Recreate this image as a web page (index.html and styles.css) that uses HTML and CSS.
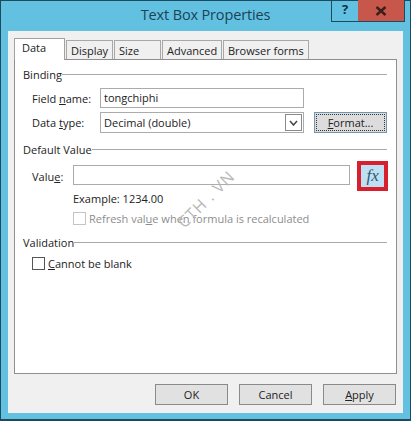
FILE: index.html
```html
<!DOCTYPE html>
<html lang="en">
<head>
    <meta charset="UTF-8">
    <meta name="viewport" content="width=device-width, initial-scale=1.0">
    <title>Text Box Properties</title>
    <link rel="stylesheet" href="styles.css">
</head>
<body>
    <div class="window">
        <header class="titlebar">
            <h1>Text Box Properties</h1>
            <div class="controls">
                <span class="help">?</span>
                <span class="close">
                    <svg width="12" height="10" viewBox="0 0 12 10"><path d="M1.5 1 L10.5 9 M10.5 1 L1.5 9" stroke="#3a1f1a" stroke-width="2.4" fill="none"/></svg>
                </span>
            </div>
        </header>

        <div class="client">
            <div class="tabs">
                <span class="tab active tab-data">Data</span>
                <span class="tab tab-display">Display</span>
                <span class="tab tab-size">Size</span>
                <span class="tab tab-advanced">Advanced</span>
                <span class="tab tab-browser">Browser forms</span>
            </div>

            <div class="panel">
                <div class="group-title">Binding</div>
                <div class="row row-field">
                    <label class="field-label">Field <u>n</u>ame:</label>
                    <div class="input input-name">tongchiphi</div>
                </div>
                <div class="row row-type">
                    <label class="field-label">Data <u>t</u>ype:</label>
                    <div class="input input-name select">
                        <span>Decimal (double)</span>
                        <span class="arrow">
                            <svg width="9" height="6" viewBox="0 0 9 6"><path d="M1 1 L4.5 5 L8 1" stroke="#444" stroke-width="1.5" fill="none"/></svg>
                        </span>
                    </div>
                    <button class="btn btn-format"><u>F</u>ormat...</button>
                </div>

                <div class="group-title group-default">Default Value</div>
                <div class="row row-value">
                    <label class="value-label">Valu<u>e</u>:</label>
                    <div class="input input-value"></div>
                    <div class="fx-button"><span class="fx">fx</span></div>
                </div>
                <div class="example">Example: 1234.00</div>
                <div class="check-row check-refresh">
                    <span class="checkbox disabled"></span>
                    <span class="disabled-text">Refresh val<u>u</u>e when formula is recalculated</span>
                </div>

                <div class="group-title group-validation">Validation</div>
                <div class="check-row check-blank">
                    <span class="checkbox"></span>
                    <span><u>C</u>annot be blank</span>
                </div>

                <div class="watermark">CTH . VN</div>
            </div>

            <div class="footer">
                <button class="btn btn-footer">OK</button>
                <button class="btn btn-footer">Cancel</button>
                <button class="btn btn-footer"><u>A</u>pply</button>
            </div>
        </div>
    </div>
</body>
</html>
```

FILE: styles.css
```css
* { box-sizing: border-box; }
html, body { margin: 0; padding: 0; }
body { width: 411px; height: 421px; overflow: hidden; font-family: "Open Sans", sans-serif; font-size: 11px; color: #222; }
u { text-underline-offset: 1px; }

.window { width: 411px; height: 421px; background: #62c1e0; border: 1px solid #1d4a5e; border-bottom-width: 2px; padding: 0 7px 6px; display: flex; flex-direction: column; }

.titlebar { height: 30px; display: flex; justify-content: center; position: relative; }
.titlebar h1 { margin: 3px 0 0; font-size: 14.5px; font-weight: 400; letter-spacing: -0.15px; color: #1c4258; line-height: 22px; }
.controls { position: absolute; top: -1px; right: -2px; height: 22px; display: flex; border: 1px solid #1f4a5e; border-top: none; }
.help { width: 26px; text-align: center; font-weight: 700; font-size: 13px; line-height: 19px; color: #14304a; }
.close { width: 46px; background: #c7574a; display: flex; align-items: center; justify-content: center; }

.client { flex: 1; background: #f0f0f0; padding: 7px 6px 0; display: flex; flex-direction: column; }

.tabs { display: flex; height: 21px; align-items: flex-end; gap: 1px; position: relative; z-index: 1; }
.tab { height: 19px; background: #f0f0f0; border: 1px solid #a8a8a8; border-bottom: none; padding: 2px 0 0 4px; line-height: 16px; white-space: nowrap; }
.tab.active { height: 22px; margin-bottom: -1px; background: #fff; border-color: #a0a0a0; padding: 1px 0 0 7px; }
.tab-data { width: 51px; }
.tab-display { width: 47px; }
.tab-size { width: 47px; }
.tab-advanced { width: 60px; }
.tab-browser { width: 86px; }

.panel { height: 315px; background: #fff; border: 1px solid #8f8f8f; padding: 0 8px; position: relative; }

.group-title { display: flex; align-items: center; height: 16px; margin-top: 6px; }
.group-title::after { content: ""; flex: 1; height: 1px; background: #a8a8a8; margin-right: 1px; }
.group-default { margin-top: 8px; }
.group-validation { margin-top: 8px; }

.row { display: flex; align-items: center; }
.row-field { margin-top: 6px; height: 20px; }
.row-type { margin-top: 4px; height: 21px; }
.row-value { margin-top: 4px; height: 30px; padding-left: 9px; }

.field-label { width: 77px; padding-left: 9px; }
.value-label { width: 41px; }

.input { height: 100%; border: 1px solid #ababab; background: #fff; padding: 0 3px; line-height: 18px; }
.input-name { width: 204px; }
.select { display: flex; justify-content: space-between; align-items: center; padding-right: 1px; }
.arrow { width: 17px; height: 17px; border: 1px solid #8a8a8a; display: flex; align-items: center; justify-content: center; }
.input-value { width: 279px; height: 20px; margin-bottom: 2px; }

.fx-button { width: 31px; height: 30px; margin-left: 7px; background: #bfe0f2; border: 4px solid #d71f2e; display: flex; align-items: center; justify-content: center; }
.fx { font-family: "Liberation Serif", serif; font-style: italic; font-size: 17px; color: #2c5a70; line-height: 20px; }

.btn { font-family: inherit; font-size: 11px; color: #222; background: #e1e1e1; border: 1px solid #8a8a8a; padding: 0; height: 21px; }
.btn-format { width: 73px; margin-left: 10px; background: #dcdcdc; border-color: #6f97b0; outline: 1px dotted #333; outline-offset: -3px; }

.example { margin: 0 0 0 50px; line-height: 16px; }

.check-row { display: flex; align-items: center; gap: 3px; height: 16px; }
.check-refresh { margin: 3px 0 0 50px; }
.check-blank { margin: 5px 0 0 9px; }
.checkbox { width: 13px; height: 13px; border: 1px solid #555; background: #fff; }
.checkbox.disabled { border-color: #c4c4c4; }
.disabled-text { color: #8d8d8d; }

/* watermark over the form */
.watermark { position: absolute; left: 141px; top: 128px; width: 100px; text-align: center; font-size: 16px; color: #b8b8b8; transform: rotate(-45deg); letter-spacing: 1px; pointer-events: none; }

.footer { display: flex; justify-content: flex-end; gap: 11px; padding: 10px 1px 0 0; }
.btn-footer { width: 73px; }
```
